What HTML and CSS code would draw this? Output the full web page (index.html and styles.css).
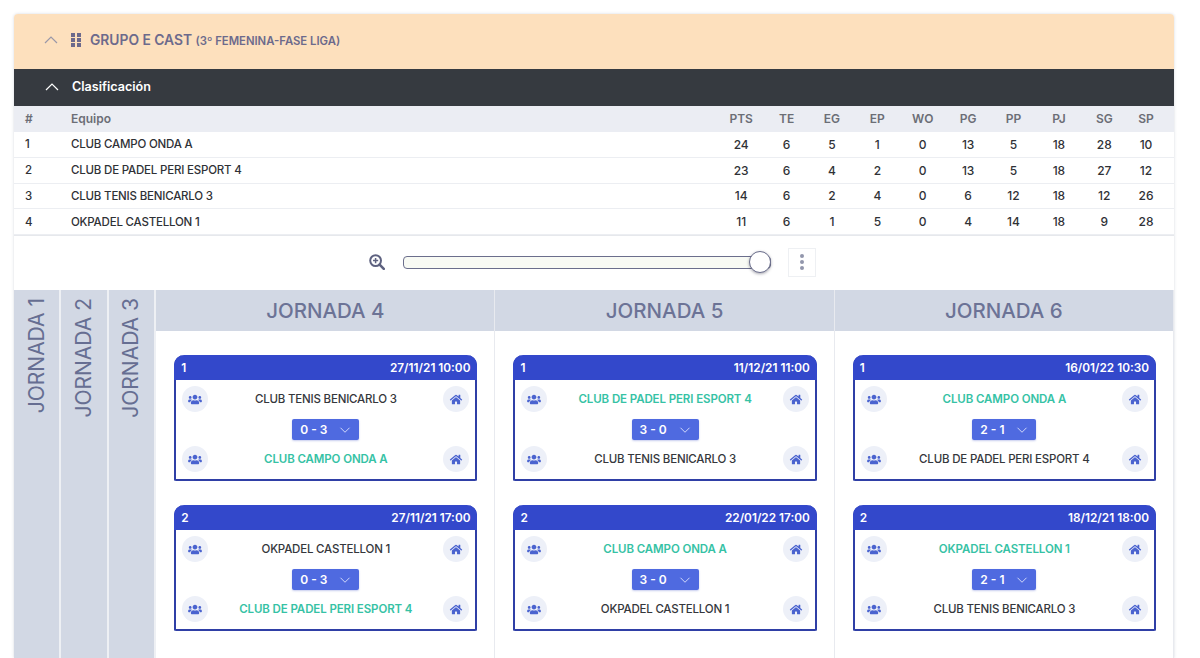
FILE: index.html
```html
<!DOCTYPE html>
<html lang="es">
<head>
<meta charset="utf-8">
<title>Grupo E Cast</title>
<link rel="stylesheet" href="styles.css">
</head>
<body>
<svg class="defs" width="0" height="0" aria-hidden="true">
  <symbol id="users" viewBox="0 0 640 512"><path d="M96 224c35.3 0 64-28.7 64-64s-28.7-64-64-64-64 28.7-64 64 28.7 64 64 64zm448 0c35.3 0 64-28.7 64-64s-28.7-64-64-64-64 28.7-64 64 28.7 64 64 64zm32 32h-64c-17.6 0-33.5 7.1-45.1 18.6 40.3 22.1 68.9 62 75.1 109.4h66c17.7 0 32-14.3 32-32v-32c0-35.3-28.7-64-64-64zm-256 0c61.9 0 112-50.1 112-112S381.9 32 320 32 208 82.1 208 144s50.1 112 112 112zm76.8 32h-8.3c-20.8 10-43.9 16-68.5 16s-47.6-6-68.5-16h-8.3C179.6 288 128 339.6 128 403.2V432c0 26.5 21.5 48 48 48h288c26.5 0 48-21.5 48-48v-28.8c0-63.6-51.6-115.2-115.2-115.2zm-223.7-13.4C161.5 263.1 145.6 256 128 256H64c-35.3 0-64 28.7-64 64v32c0 17.7 14.3 32 32 32h65.9c6.3-47.4 34.9-87.3 75.2-109.4z"/></symbol>
  <symbol id="home" viewBox="0 0 576 512"><path d="M280.37 148.26L96 300.11V464a16 16 0 0 0 16 16l112.06-.29a16 16 0 0 0 15.92-16V368a16 16 0 0 1 16-16h64a16 16 0 0 1 16 16v95.64a16 16 0 0 0 16 16.05L464 480a16 16 0 0 0 16-16V300L295.67 148.26a12.19 12.19 0 0 0-15.3 0zM571.6 251.47L488 182.56V44.05a12 12 0 0 0-12-12h-56a12 12 0 0 0-12 12v72.61L318.47 43a48 48 0 0 0-61 0L4.34 251.47a12 12 0 0 0-1.6 16.9l25.5 31A12 12 0 0 0 45.15 301l235.22-193.74a12.19 12.19 0 0 1 15.3 0L530.9 301a12 12 0 0 0 16.9-1.6l25.5-31a12 12 0 0 0-1.7-16.93z"/></symbol>
  <symbol id="chev" viewBox="0 0 14 8"><path d="M1 7l6-6 6 6" fill="none" stroke="currentColor" stroke-width="1.2"/></symbol>
</svg>
<main class="panel">
  <header class="group-head">
    <svg class="chev chev-group"><use href="#chev"/></svg>
    <svg class="grip" viewBox="0 0 10 14"><path d="M0 0h4v4H0zM6 0h4v4H6zM0 5h4v4H0zM6 5h4v4H6zM0 10h4v4H0zM6 10h4v4H6z"/></svg>
    <h1 class="group-title">GRUPO E CAST <small class="group-sub">(3º FEMENINA-FASE LIGA)</small></h1>
  </header>
  <div class="class-head">
    <svg class="chev chev-class"><use href="#chev"/></svg>
    <span>Clasificación</span>
  </div>
  <div class="table">
    <div class="row row-head"><span>#</span><span>Equipo</span><span class="n">PTS</span><span class="n">TE</span><span class="n">EG</span><span class="n">EP</span><span class="n">WO</span><span class="n">PG</span><span class="n">PP</span><span class="n">PJ</span><span class="n">SG</span><span class="n">SP</span></div>
    <div class="row"><span>1</span><span>CLUB CAMPO ONDA A</span><span class="n">24</span><span class="n">6</span><span class="n">5</span><span class="n">1</span><span class="n">0</span><span class="n">13</span><span class="n">5</span><span class="n">18</span><span class="n">28</span><span class="n">10</span></div>
    <div class="row"><span>2</span><span>CLUB DE PADEL PERI ESPORT 4</span><span class="n">23</span><span class="n">6</span><span class="n">4</span><span class="n">2</span><span class="n">0</span><span class="n">13</span><span class="n">5</span><span class="n">18</span><span class="n">27</span><span class="n">12</span></div>
    <div class="row"><span>3</span><span>CLUB TENIS BENICARLO 3</span><span class="n">14</span><span class="n">6</span><span class="n">2</span><span class="n">4</span><span class="n">0</span><span class="n">6</span><span class="n">12</span><span class="n">18</span><span class="n">12</span><span class="n">26</span></div>
    <div class="row"><span>4</span><span>OKPADEL CASTELLON 1</span><span class="n">11</span><span class="n">6</span><span class="n">1</span><span class="n">5</span><span class="n">0</span><span class="n">4</span><span class="n">14</span><span class="n">18</span><span class="n">9</span><span class="n">28</span></div>
  </div>
  <div class="zoom-bar">
    <svg class="zoom-icon" viewBox="0 0 16 16"><circle cx="6.6" cy="6.6" r="5.4" fill="none" stroke="currentColor" stroke-width="2"/><path d="M10.6 10.6l4.2 4.2" stroke="currentColor" stroke-width="2.6" stroke-linecap="round"/><path d="M6.6 4v5.2M4 6.6h5.2" stroke="currentColor" stroke-width="1.5"/></svg>
    <div class="slider"><span class="thumb"></span></div>
    <button class="kebab" type="button" aria-label="Más"><i></i><i></i><i></i></button>
  </div>
  <section class="board">
    <div class="side"><span>JORNADA 1</span></div>
    <div class="side"><span>JORNADA 2</span></div>
    <div class="side"><span>JORNADA 3</span></div>

    <div class="round">
      <h2 class="round-title">JORNADA 4</h2>
      <div class="matches">
        <article class="match">
          <div class="match-head"><span>1</span><span>27/11/21 10:00</span></div>
          <div class="team"><span class="ic"><svg><use href="#users"/></svg></span><span class="name">CLUB TENIS BENICARLO 3</span><span class="ic"><svg><use href="#home"/></svg></span></div>
          <div class="score-line"><span class="score">0 - 3<svg><use href="#chev"/></svg></span></div>
          <div class="team"><span class="ic"><svg><use href="#users"/></svg></span><span class="name win">CLUB CAMPO ONDA A</span><span class="ic"><svg><use href="#home"/></svg></span></div>
        </article>
        <article class="match">
          <div class="match-head"><span>2</span><span>27/11/21 17:00</span></div>
          <div class="team"><span class="ic"><svg><use href="#users"/></svg></span><span class="name">OKPADEL CASTELLON 1</span><span class="ic"><svg><use href="#home"/></svg></span></div>
          <div class="score-line"><span class="score">0 - 3<svg><use href="#chev"/></svg></span></div>
          <div class="team"><span class="ic"><svg><use href="#users"/></svg></span><span class="name win">CLUB DE PADEL PERI ESPORT 4</span><span class="ic"><svg><use href="#home"/></svg></span></div>
        </article>
      </div>
    </div>

    <div class="round">
      <h2 class="round-title">JORNADA 5</h2>
      <div class="matches">
        <article class="match">
          <div class="match-head"><span>1</span><span>11/12/21 11:00</span></div>
          <div class="team"><span class="ic"><svg><use href="#users"/></svg></span><span class="name win">CLUB DE PADEL PERI ESPORT 4</span><span class="ic"><svg><use href="#home"/></svg></span></div>
          <div class="score-line"><span class="score">3 - 0<svg><use href="#chev"/></svg></span></div>
          <div class="team"><span class="ic"><svg><use href="#users"/></svg></span><span class="name">CLUB TENIS BENICARLO 3</span><span class="ic"><svg><use href="#home"/></svg></span></div>
        </article>
        <article class="match">
          <div class="match-head"><span>2</span><span>22/01/22 17:00</span></div>
          <div class="team"><span class="ic"><svg><use href="#users"/></svg></span><span class="name win">CLUB CAMPO ONDA A</span><span class="ic"><svg><use href="#home"/></svg></span></div>
          <div class="score-line"><span class="score">3 - 0<svg><use href="#chev"/></svg></span></div>
          <div class="team"><span class="ic"><svg><use href="#users"/></svg></span><span class="name">OKPADEL CASTELLON 1</span><span class="ic"><svg><use href="#home"/></svg></span></div>
        </article>
      </div>
    </div>

    <div class="round">
      <h2 class="round-title">JORNADA 6</h2>
      <div class="matches">
        <article class="match">
          <div class="match-head"><span>1</span><span>16/01/22 10:30</span></div>
          <div class="team"><span class="ic"><svg><use href="#users"/></svg></span><span class="name win">CLUB CAMPO ONDA A</span><span class="ic"><svg><use href="#home"/></svg></span></div>
          <div class="score-line"><span class="score">2 - 1<svg><use href="#chev"/></svg></span></div>
          <div class="team"><span class="ic"><svg><use href="#users"/></svg></span><span class="name">CLUB DE PADEL PERI ESPORT 4</span><span class="ic"><svg><use href="#home"/></svg></span></div>
        </article>
        <article class="match">
          <div class="match-head"><span>2</span><span>18/12/21 18:00</span></div>
          <div class="team"><span class="ic"><svg><use href="#users"/></svg></span><span class="name win">OKPADEL CASTELLON 1</span><span class="ic"><svg><use href="#home"/></svg></span></div>
          <div class="score-line"><span class="score">2 - 1<svg><use href="#chev"/></svg></span></div>
          <div class="team"><span class="ic"><svg><use href="#users"/></svg></span><span class="name">CLUB TENIS BENICARLO 3</span><span class="ic"><svg><use href="#home"/></svg></span></div>
        </article>
      </div>
    </div>
  </section>
</main>
</body>
</html>
```
FILE: styles.css
```css
* { box-sizing: border-box; }
html, body { height: 100%; }
body {
  margin: 0;
  padding: 14px 26px 0 14px;
  background: #fff;
  overflow: hidden;
  font-family: "Inter", "Liberation Sans", sans-serif;
  color: #2f3136;
}
.defs { position: absolute; }
.panel {
  height: 100%;
  display: flex;
  flex-direction: column;
  background: #fff;
  border-radius: 4px 4px 0 0;
  box-shadow: 0 0 3px rgba(60, 70, 100, .22);
}
.group-head {
  height: 55px;
  flex: none;
  display: flex;
  align-items: center;
  padding-left: 30px;
  padding-bottom: 4px;
  background: #fde0bd;
  border-radius: 4px 4px 0 0;
}
.chev { width: 14px; height: 8px; }
.chev-group { color: #9a98a8; }
.grip { width: 10px; height: 14px; margin-left: 13px; fill: #6c6a8c; }
.group-title {
  margin: 0 0 0 9px;
  font-size: 13.8px;
  font-weight: 600;
  color: #6c6a8c;
}
.group-sub { font-size: 11.3px; font-weight: 600; }
.class-head {
  height: 37px;
  flex: none;
  display: flex;
  align-items: center;
  gap: 13px;
  padding-left: 31px;
  padding-bottom: 2px;
  background: #363a40;
  color: #fff;
  font-size: 12.6px;
  font-weight: 600;
}
.chev-class { color: #fff; }
.table { flex: none; font-size: 11.5px; font-weight: 500; letter-spacing: -.2px; }
.row {
  display: grid;
  grid-template-columns: 46px 1fr repeat(9, 45.4px) 38px;
  align-items: center;
  height: 25.75px;
  padding: 0 9px 0 11px;
  border-bottom: 1px solid #eceef2;
}
.row-head {
  height: 26px;
  padding-bottom: 2px;
  background: #ebedf3;
  color: #6b6e76;
  font-size: 12px;
  font-weight: 600;
  letter-spacing: 0;
  border-bottom: 0;
}
.n { text-align: center; font-size: 12px; letter-spacing: 0; }
.zoom-bar {
  height: 55px;
  flex: none;
  display: flex;
  align-items: center;
  justify-content: center;
  padding: 0 4px 2px 0;
  border-top: 1px solid #e6e8ec;
}
.zoom-icon { width: 16px; height: 16px; color: #5e6280; margin-right: 18px; }
.slider {
  position: relative;
  width: 368px;
  height: 13px;
  background: #f8faf4;
  border: 1.5px solid #6b6e8c;
  border-radius: 4px;
  margin-right: 17px;
}
.thumb {
  position: absolute;
  right: -1px;
  top: 50%;
  width: 22px;
  height: 22px;
  margin-top: -11px;
  background: #fff;
  border: 1px solid #6b6e8c;
  border-radius: 50%;
  box-shadow: 0 1px 3px rgba(40, 40, 60, .4);
}
.kebab {
  width: 28px;
  height: 29px;
  padding: 0;
  display: flex;
  flex-direction: column;
  align-items: center;
  justify-content: center;
  gap: 2px;
  background: #fff;
  border: 1px solid #eef0f3;
}
.kebab i { width: 4px; height: 4px; border-radius: 50%; background: #9296ac; }
.board {
  flex: 1;
  min-height: 0;
  display: flex;
}
.side {
  width: 47.4px;
  flex: none;
  padding: 8px 1px 0 0;
  display: flex;
  justify-content: center;
  align-items: flex-start;
  background: #d2d8e4;
  border-right: 2px solid #eef0f4;
}
.side span {
  writing-mode: vertical-rl;
  transform: rotate(180deg);
  font-size: 21px;
  font-weight: 400;
  color: #666e92;
}
.round {
  flex: 1 1 0;
  min-width: 0;
  border-right: 1px solid #e8eaef;
}
.round-title {
  height: 41px;
  margin: 0;
  padding-bottom: 1px;
  display: flex;
  align-items: center;
  justify-content: center;
  background: #d2d8e4;
  font-size: 20.5px;
  font-weight: 500;
  color: #6c7396;
}
.matches {
  display: flex;
  flex-direction: column;
  gap: 24px;
  padding: 24px 17px 0 18px;
}
.match {
  height: 126px;
  border: 2px solid #2f3fa6;
  border-top: 0;
  border-radius: 10px 10px 2px 2px;
  background: #fff;
}
.match-head {
  height: 25px;
  margin: 0 -2px;
  padding: 0 7px;
  display: flex;
  align-items: center;
  justify-content: space-between;
  background: #3348cb;
  border-radius: 10px 10px 0 0;
  color: #fff;
  font-size: 11.8px;
  font-weight: 600;
}
.team {
  height: 26px;
  margin-top: 6px;
  padding: 0 6px;
  display: flex;
  align-items: center;
  justify-content: space-between;
  font-size: 11.5px;
  font-weight: 500;
  letter-spacing: -.2px;
}
.name { color: #35373c; }
.name.win { color: #36c2a5; font-weight: 600; letter-spacing: -.1px; }
.ic {
  width: 26px;
  height: 26px;
  display: flex;
  align-items: center;
  justify-content: center;
  background: #edf0f8;
  border-radius: 50%;
}
.ic svg { width: 14px; height: 11px; fill: #4a63cf; }
.score-line {
  height: 21px;
  margin-top: 7px;
  display: flex;
  justify-content: center;
}
.score {
  display: flex;
  align-items: center;
  gap: 12px;
  padding: 0 8px;
  background: #4f6ae0;
  border-radius: 2px;
  color: #fff;
  font-size: 12px;
  font-weight: 600;
  box-shadow: 0 1px 2px rgba(70, 90, 200, .3);
}
.score svg { width: 12px; height: 6px; transform: rotate(180deg); color: #dfe4fb; }
```
